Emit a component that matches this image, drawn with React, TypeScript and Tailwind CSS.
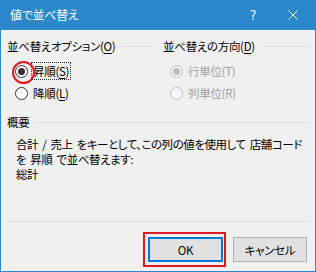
import React from 'react';

const Radio: React.FC<{ checked?: boolean; disabled?: boolean; circled?: boolean }> = ({ checked, disabled, circled }) => (
    <span
        className={
            disabled
                ? 'relative flex h-[13px] w-[13px] shrink-0 items-center justify-center rounded-full border border-[#bcbcbc] bg-[#f7f7f7]'
                : 'relative flex h-[13px] w-[13px] shrink-0 items-center justify-center rounded-full border border-[#333333] bg-white'
        }
    >
        {checked && (
            <span className={disabled ? 'h-[7px] w-[7px] rounded-full bg-[#bcbcbc]' : 'h-[7px] w-[7px] rounded-full bg-[#333333]'} />
        )}
        {circled && <span className="absolute -top-[5px] -left-[4px] h-[23px] w-[23px] rounded-full border-2 border-[#dd1a22]" />}
    </span>
);

const GroupHeading: React.FC<{ children: React.ReactNode }> = ({ children }) => (
    <div className="flex h-[16px] items-center">
        <span className="whitespace-nowrap">{children}</span>
        <span className="ml-[6px] h-px flex-1 bg-[#dcdcdc]" />
    </div>
);

const Mn: React.FC<{ children: React.ReactNode }> = ({ children }) => (
    <span className="underline underline-offset-[2px]">{children}</span>
);

export default function App() {
    return (
        <div className="flex h-[272px] w-[316px] flex-col border-x border-b border-[#2b89cb] bg-[#f0f0f0] font-['Noto_Sans_CJK_JP',sans-serif] text-[11.5px] leading-[16px] tracking-[-0.3px] text-black [font-feature-settings:'palt']">
            {/* title bar */}
            <div className="flex h-[30px] shrink-0 items-center bg-[#2b89cb] pl-[9px] text-white">
                <span className="flex-1 text-[12px]">値で並べ替え</span>
                <span className="w-[10px] text-center text-[13px]">?</span>
                <span className="ml-[30px] mr-[17px] flex h-[10px] w-[10px] items-center justify-center">
                    <svg width="10" height="10" viewBox="0 0 10 10">
                        <path d="M0.5 0.5 L9.5 9.5 M9.5 0.5 L0.5 9.5" stroke="white" strokeWidth="1" />
                    </svg>
                </span>
            </div>

            <div className="flex flex-1 flex-col px-[6px] pt-[8px] pb-[9px]">
                <div className="grid grid-cols-2 gap-x-[10px]">
                    <div>
                        <GroupHeading>
                            並べ替えオプション(<Mn>O</Mn>)
                        </GroupHeading>
                        <div className="mt-[6px] flex flex-col pl-[8px]">
                            <label className="flex h-[22px] items-center">
                                <Radio checked circled />
                                <span className="ml-[3px] border border-dotted border-[#333333] px-[1px] leading-[16px]">
                                    昇順(<Mn>S</Mn>)
                                </span>
                            </label>
                            <label className="flex h-[22px] items-center">
                                <Radio />
                                <span className="ml-[4px] px-[1px]">
                                    降順(<Mn>L</Mn>)
                                </span>
                            </label>
                        </div>
                    </div>
                    <div>
                        <GroupHeading>
                            並べ替えの方向(<Mn>D</Mn>)
                        </GroupHeading>
                        <div className="mt-[6px] flex flex-col pl-[7px] text-[#a0a0a0]">
                            <label className="flex h-[22px] items-center">
                                <Radio checked disabled />
                                <span className="ml-[4px] px-[1px]">行単位(T)</span>
                            </label>
                            <label className="flex h-[22px] items-center">
                                <Radio disabled />
                                <span className="ml-[4px] px-[1px]">列単位(R)</span>
                            </label>
                        </div>
                    </div>
                </div>

                <div className="mt-[10px]">
                    <GroupHeading>概要</GroupHeading>
                </div>
                <div className="mt-[7px] pl-[9px] leading-[15px] tracking-[-0.45px] whitespace-nowrap [word-spacing:2px]">
                    <div>合計 / 売上 をキーとして、この列の値を使用して 店舗コード</div>
                    <div>を 昇順 で並べ替えます:</div>
                    <div>総計</div>
                </div>

                <div className="mt-auto h-px bg-[#dcdcdc]" />
                <div className="mt-[15px] flex justify-end gap-[10px] pr-[2px]">
                    <div className="relative">
                        <button className="flex h-[25px] w-[75px] items-center justify-center border-2 border-[#0078d7] bg-[#e1e1e1]">
                            OK
                        </button>
                        <span className="absolute -top-[5px] -left-[5px] h-[35px] w-[83px] border-2 border-[#dd1a22]" />
                    </div>
                    <button className="flex h-[25px] w-[74px] items-center justify-center border border-[#adadad] bg-[#e1e1e1]">
                        キャンセル
                    </button>
                </div>
            </div>
        </div>
    );
}
